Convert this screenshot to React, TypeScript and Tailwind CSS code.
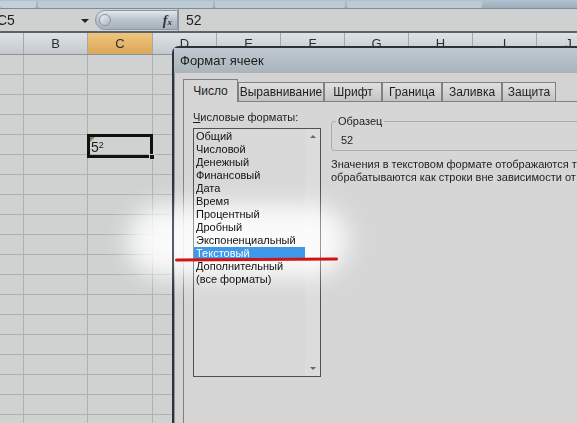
const columns = [
  { label: "A", width: 64 },
  { label: "B", width: 64 },
  { label: "C", width: 65, active: true },
  { label: "D", width: 64 },
  { label: "E", width: 64 },
  { label: "F", width: 64 },
  { label: "G", width: 64 },
  { label: "H", width: 64 },
  { label: "I", width: 64 },
  { label: "J", width: 64 },
];

const rows = Array.from({ length: 19 }, (_, i) => i + 1);

const tabs = ["Число", "Выравнивание", "Шрифт", "Граница", "Заливка", "Защита"];
const tabWidths = ["w-[55px]", "w-[86px]", "w-[58px]", "w-[60px]", "w-[60px]", "w-[54px]"];

const formats = [
  "Общий",
  "Числовой",
  "Денежный",
  "Финансовый",
  "Дата",
  "Время",
  "Процентный",
  "Дробный",
  "Экспоненциальный",
  "Текстовый",
  "Дополнительный",
  "(все форматы)",
];

export default function App() {
  return (
    <div className="relative h-[423px] w-[577px] overflow-hidden bg-[#d0d2d2] font-['Liberation_Sans',Arial,sans-serif] text-[#1e1e1e]">
      {/* Ribbon remains */}
      <div className="flex h-[9px] items-end gap-[2px] border-b border-[#7d8c99] bg-gradient-to-b from-[#b4c2ce] to-[#9cadbc]">
        <div className="h-[7px] w-[36px] rounded-b-[2px] bg-[#c3cfd9]" />
        <div className="h-[7px] w-[175px] rounded-b-[2px] bg-[#bccad5]" />
        <div className="h-[7px] w-[130px] rounded-b-[2px] bg-[#bccad5]" />
        <div className="h-[7px] w-[135px] rounded-b-[2px] bg-[#bccad5]" />
      </div>

      {/* Formula bar */}
      <div className="flex h-[24px] items-center border-b-2 border-[#59636c] bg-[#cfd1d1]">
        <div className="relative flex h-full w-[95px] items-center">
          <span className="-ml-[3px] text-[14px]">C5</span>
          <span className="absolute left-[81px] top-[10px] h-0 w-0 border-x-[4px] border-t-[4px] border-x-transparent border-t-[#222]" />
        </div>
        <div className="relative flex h-[20px] w-[83px] items-center justify-end rounded-l-full border border-[#8c99a5] bg-gradient-to-b from-[#e2e7ec] via-[#b8c3cd] to-[#a5b1bc] pr-[5px]">
          <span className="absolute left-[3px] top-[3px] h-[12px] w-[12px] rounded-full border border-[#8a96a1] bg-gradient-to-br from-[#f2f4f6] to-[#a9b3bc]" />
          <span className="font-['Liberation_Serif',serif] text-[14px] font-bold italic text-[#333]">
            f<span className="text-[9px]">x</span>
          </span>
        </div>
        <div className="h-full w-px bg-[#8d959c]" />
        <span className="pl-[7px] text-[14px]">52</span>
      </div>

      {/* Sheet */}
      <div className="relative -ml-[40px]">
        <div className="flex h-[22px] border-b border-[#8c949b] bg-gradient-to-b from-[#dfe2e5] to-[#c4c9ce]">
          {columns.map((c) => (
            <div
              key={c.label}
              style={{ width: c.width }}
              className={`flex shrink-0 items-center justify-center border-r border-[#a3a9ae] text-[13px] text-[#2a2f35] ${
                c.active ? "bg-gradient-to-b from-[#efc67d] to-[#dba659]" : ""
              }`}
            >
              {c.label}
            </div>
          ))}
        </div>
        {rows.map((r) => (
          <div key={r} className="flex h-[20px]">
            {columns.map((c) => (
              <div
                key={c.label}
                style={{ width: c.width }}
                className="shrink-0 border-b border-r border-[#aeb1b2]"
              />
            ))}
          </div>
        ))}

        {/* Selected cell C5 */}
        <div className="absolute left-[127px] top-[101px] h-[24px] w-[66px] border-[3px] border-[#111]">
          <span className="absolute left-0 top-0 h-0 w-0 border-r-[5px] border-t-[5px] border-r-transparent border-t-[#6c8a5c]" />
          <span className="absolute left-[1px] top-[1px] text-[14px] leading-[18px]">
            5<sup className="text-[9px]">2</sup>
          </span>
          <span className="absolute -bottom-[5px] -right-[5px] h-[6px] w-[6px] border border-[#d0d2d2] bg-[#111]" />
        </div>
      </div>

      {/* Dialog window */}
      <div className="absolute left-[172px] top-[46px] h-[400px] w-[420px] rounded-tl-[7px] border-2 border-[#2d3238] bg-[#bcc5cd]">
        <div className="flex h-[25px] items-center bg-gradient-to-b from-[#c0c9d1] to-[#a9b4bd] pl-[6px] text-[13px] text-[#1c1c1c]">
          Формат ячеек
        </div>
        <div className="h-full border-l border-[#8c959d] bg-[#d3d3d3] pl-[8px] pt-[5px]">
          {/* Tabs */}
          <div className="flex h-[23px] items-end">
            {tabs.map((t, i) => (
              <div
                key={t}
                className={`${tabWidths[i]} flex shrink-0 items-center justify-center border border-b-0 border-[#7d8186] text-[12px] ${
                  i === 0
                    ? "relative z-10 -mb-px h-[23px] bg-[#d6d6d6] pb-[1px]"
                    : "h-[19px] bg-gradient-to-b from-[#e0e0e0] to-[#c4c4c4]"
                }`}
              >
                {t}
              </div>
            ))}
          </div>

          {/* Tab panel */}
          <div className="flex h-[340px] gap-[10px] border border-[#7d8186] bg-[#d6d6d6] pl-[9px] pt-[8px]">
            <div className="flex w-[128px] shrink-0 flex-col">
              <div className="h-[18px] text-[11px] leading-[14px]">
                <span className="underline">Ч</span>исловые форматы:
              </div>
              <div className="flex h-[249px] border border-[#4d5155] bg-[#d8d8d8]">
                <div className="flex flex-1 flex-col pt-[1px]">
                  {formats.map((f) => (
                    <div
                      key={f}
                      className={`relative z-20 h-[13px] pl-[2px] text-[11px] leading-[13px] ${
                        f === "Текстовый" ? "bg-[#3f98ea] text-white" : "text-[#111]"
                      }`}
                    >
                      {f}
                    </div>
                  ))}
                </div>
                <div className="flex w-[15px] flex-col items-center justify-between bg-[#dcdcdc] py-[6px]">
                  <span className="h-0 w-0 border-x-[3px] border-b-[3px] border-x-transparent border-b-[#666]" />
                  <span className="h-0 w-0 border-x-[3px] border-t-[3px] border-x-transparent border-t-[#666]" />
                </div>
              </div>
            </div>

            <div className="flex flex-1 flex-col pt-[11px]">
              <div className="relative h-[30px] w-[300px] rounded-[3px] border border-[#a9acaf]">
                <span className="absolute -top-[8px] left-[4px] bg-[#d6d6d6] px-[2px] text-[11px] leading-[14px]">
                  Образец
                </span>
                <span className="absolute left-[9px] top-[11px] text-[11px] leading-[14px]">52</span>
              </div>
              <div className="mt-[7px] whitespace-nowrap text-[11px] leading-[13px]">
                <div>Значения в текстовом формате отображаются так, как вводятся.</div>
                <div>обрабатываются как строки вне зависимости от содержимого.</div>
              </div>
            </div>
          </div>
        </div>
      </div>

      {/* Photo glare: lightens the grays; the list text sits above it */}
      <div className="pointer-events-none absolute left-[128px] top-[205px] h-[72px] w-[220px] rounded-full bg-white opacity-90 mix-blend-overlay blur-[12px]" />

      {/* Red marker line */}
      <div className="pointer-events-none absolute left-[175px] top-[258px] z-30 h-[3px] w-[163px] -rotate-[0.4deg] rounded-full bg-[#d01414]" />
    </div>
  );
}
